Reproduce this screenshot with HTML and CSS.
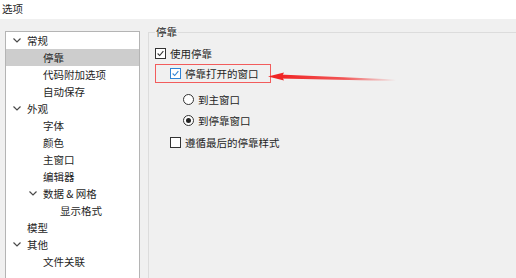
FILE: index.html
```html
<!DOCTYPE html>
<html>
<head>
	<title>选项</title>
	<meta charset=utf-8>
	<link rel="stylesheet" href="styles.css">
</head>
<body>
	<div class="titlebar">选项</div>
	<div class="main">
		<div class="tree">
			<div class="node lv1"><svg class="chev" viewBox="0 0 8 5"><path d="M0.5 0.5 L4 4 L7.5 0.5"/></svg>常规</div>
			<div class="node lv2 sel">停靠</div>
			<div class="node lv2">代码附加选项</div>
			<div class="node lv2">自动保存</div>
			<div class="node lv1"><svg class="chev" viewBox="0 0 8 5"><path d="M0.5 0.5 L4 4 L7.5 0.5"/></svg>外观</div>
			<div class="node lv2">字体</div>
			<div class="node lv2">颜色</div>
			<div class="node lv2">主窗口</div>
			<div class="node lv2">编辑器</div>
			<div class="node lv2"><svg class="chev" viewBox="0 0 8 5"><path d="M0.5 0.5 L4 4 L7.5 0.5"/></svg>数据 &amp; 网格</div>
			<div class="node lv3">显示格式</div>
			<div class="node lv1">模型</div>
			<div class="node lv1"><svg class="chev" viewBox="0 0 8 5"><path d="M0.5 0.5 L4 4 L7.5 0.5"/></svg>其他</div>
			<div class="node lv2">文件关联</div>
		</div>
		<fieldset class="group">
			<legend>停靠</legend>
			<div class="opt first">
				<span class="check on"><svg viewBox="0 0 11 11"><path d="M2 5.5 L4.5 8 L9 2.5"/></svg></span>使用停靠
			</div>
			<div class="mark">
				<div class="opt">
					<span class="check on focus"><svg viewBox="0 0 11 11"><path d="M2 5.5 L4.5 8 L9 2.5"/></svg></span>停靠打开的窗口
				</div>
			</div>
			<div class="opt radio-row r1">
				<span class="radio"></span>到主窗口
			</div>
			<div class="opt radio-row r2">
				<span class="radio on"></span>到停靠窗口
			</div>
			<div class="opt ind last">
				<span class="check"></span>遵循最后的停靠样式
			</div>
		</fieldset>
	</div>
	<svg class="arrow" width="516" height="278" viewBox="0 0 516 278">
		<defs>
			<linearGradient id="fade" x1="280" y1="0" x2="396" y2="0" gradientUnits="userSpaceOnUse">
				<stop offset="0" stop-color="#f02424"/>
				<stop offset="0.55" stop-color="#f23a3a" stop-opacity="0.85"/>
				<stop offset="1" stop-color="#f23a3a" stop-opacity="0"/>
			</linearGradient>
		</defs>
		<polygon points="279,74.5 396,79.5 396,81 279,78.5" fill="url(#fade)"/>
		<polygon points="268,76.5 284,72.5 282,76.5 284,80.5" fill="#f02424"/>
	</svg>
</body>
</html>
```
FILE: styles.css
```css
body{
	margin:0;
	width:516px;
	height:278px;
	overflow:hidden;
	background:#f0f0f0;
	font-family:"Noto Sans CJK SC", "Microsoft YaHei", sans-serif;
	font-size:10.5px;
	color:#1e1e1e;
	position:relative;
}
.titlebar{
	height:19px;
	line-height:17px;
	padding-left:2px;
	background:#fff;
}
.main{
	display:flex;
	align-items:flex-start;
	height:259px;
	overflow:hidden;
}
.tree{
	margin:12px 0 0 5px;
	width:133px;
	height:247px;
	background:#fff;
	border:1px solid #b4b4b4;
	border-bottom:none;
}
.node{
	height:17px;
	line-height:17px;
	display:flex;
	align-items:center;
	white-space:nowrap;
}
.lv1{padding-left:21px;}
.lv2{padding-left:37px;}
.lv3{padding-left:54px;}
.sel{background:#cdcdcd;}
.chev{
	width:8px;
	height:5px;
	margin:0 6px 0 -14px;
	flex:none;
	fill:none;
	stroke:#4a4a4a;
	stroke-width:1.2;
}
.group{
	margin:6px -20px 0 8px;
	padding:0 0 0 6px;
	flex:1;
	height:253px;
	border:1px solid #dcdcdc;
	border-bottom:none;
	min-width:0;
}
.group legend{
	padding:0 1px;
	margin-left:0;
	line-height:14px;
}
.opt{
	display:flex;
	align-items:center;
	height:16px;
	white-space:nowrap;
}
.first{margin-top:6px;}
.mark{
	margin-top:3px;
	width:114px;
	height:17px;
	border:1px solid #f25c5c;
	display:flex;
	align-items:center;
}
.mark .opt{padding-left:14px;}
.check{
	width:9px;
	height:9px;
	border:1px solid #333;
	background:#fff;
	margin-right:4px;
	display:inline-flex;
	flex:none;
}
.check svg{width:9px;height:9px;}
.check path{
	fill:none;
	stroke:#333;
	stroke-width:1.3;
}
.check.focus{border-color:#2f84d6;}
.check.focus path{stroke:#2f84d6;}
.radio-row{padding-left:28px;}
.r1{margin-top:8px;}
.r2{margin-top:5px;}
.radio{
	width:9px;
	height:9px;
	border:1px solid #333;
	border-radius:50%;
	background:#fff;
	margin-right:4px;
	position:relative;
	flex:none;
}
.radio.on::after{
	content:"";
	position:absolute;
	left:2px;
	top:2px;
	width:5px;
	height:5px;
	border-radius:50%;
	background:#222;
}
.ind{padding-left:15px;}
.last{margin-top:6px;}
.arrow{
	position:absolute;
	left:0;
	top:0;
	pointer-events:none;
}
```
